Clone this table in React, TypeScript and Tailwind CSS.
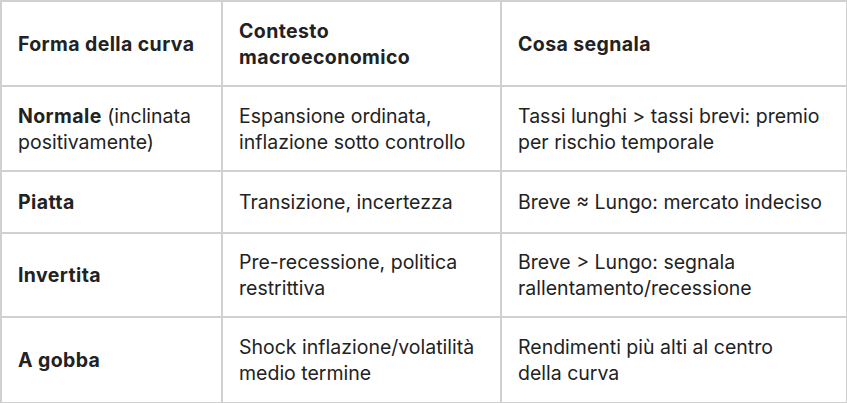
import React from "react";

const rows = [
  {
    h: "h-[85px]",
    a: (
      <>
        <span className="font-bold tracking-[0.02em]">Normale</span> (inclinata
        <br />
        positivamente)
      </>
    ),
    b: (
      <>
        Espansione ordinata,
        <br />
        inflazione sotto controllo
      </>
    ),
    c: (
      <>
        Tassi lunghi &gt; tassi brevi: premio
        <br />
        per rischio temporale
      </>
    ),
  },
  {
    h: "h-[62px]",
    a: <span className="font-bold tracking-[0.02em]">Piatta</span>,
    b: "Transizione, incertezza",
    c: "Breve ≈ Lungo: mercato indeciso",
  },
  {
    h: "h-[84px]",
    a: <span className="font-bold tracking-[0.02em]">Invertita</span>,
    b: (
      <>
        Pre-recessione, politica
        <br />
        restrittiva
      </>
    ),
    c: (
      <>
        Breve &gt; Lungo: segnala
        <br />
        rallentamento/recessione
      </>
    ),
  },
  {
    h: "h-[86px]",
    a: <span className="font-bold tracking-[0.02em]">A gobba</span>,
    b: (
      <>
        Shock inflazione/volatilità
        <br />
        medio termine
      </>
    ),
    c: (
      <>
        Rendimenti più alti al centro
        <br />
        della curva
      </>
    ),
  },
];

export default function App() {
  return (
    <div className="w-[847px] h-[403px] bg-white" style={{ fontFamily: "Inter, 'Open Sans', sans-serif" }}>
      <table className="w-[846px] border-collapse text-[19.5px] leading-[26px] text-[#222] table-fixed">
        <colgroup>
          <col className="w-[221px]" />
          <col className="w-[279px]" />
          <col className="w-[346px]" />
        </colgroup>
        <thead>
          <tr className="h-[85px]">
            <th className="border-2 border-[#d0d0d0] pl-4 pr-2 text-left font-bold tracking-[0.02em]">Forma della curva</th>
            <th className="border-2 border-[#d0d0d0] pl-4 pr-2 text-left font-bold tracking-[0.02em]">
              Contesto
              <br />
              macroeconomico
            </th>
            <th className="border-2 border-[#d0d0d0] pl-4 pr-2 text-left font-bold tracking-[0.02em]">Cosa segnala</th>
          </tr>
        </thead>
        <tbody>
          {rows.map((r, i) => (
            <tr key={i} className={r.h}>
              <td className="border-2 border-[#d0d0d0] pl-4 pr-2 align-middle whitespace-nowrap">{r.a}</td>
              <td className="border-2 border-[#d0d0d0] pl-4 pr-2 align-middle whitespace-nowrap">{r.b}</td>
              <td className="border-2 border-[#d0d0d0] pl-4 pr-2 align-middle whitespace-nowrap">{r.c}</td>
            </tr>
          ))}
        </tbody>
      </table>
    </div>
  );
}
